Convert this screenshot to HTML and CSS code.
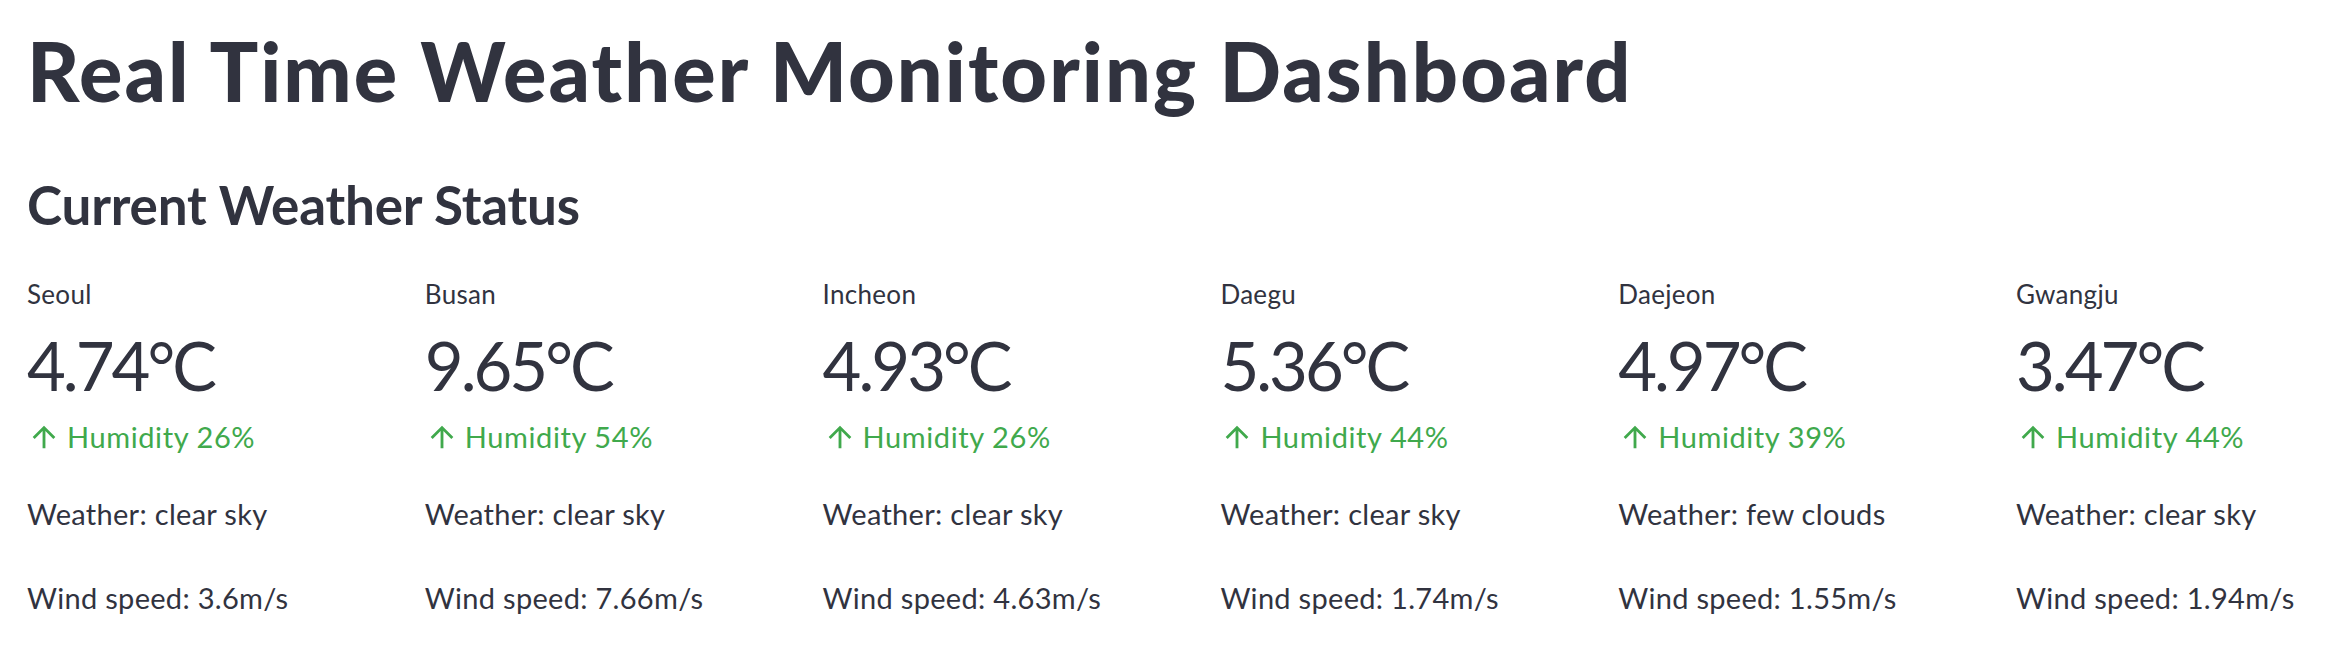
FILE: index.html
```html
<!DOCTYPE html>
<html lang="en">
<head>
<meta charset="utf-8">
<title>Real Time Weather Monitoring Dashboard</title>
<link rel="stylesheet" href="styles.css">
</head>
<body>
<main class="page">
  <h1 class="title">Real Time Weather Monitoring Dashboard</h1>
  <h3 class="subheader">Current Weather Status</h3>
  <div class="columns">
    <div class="column">
      <div class="metric-label">Seoul</div>
      <div class="metric-value">4.74°C</div>
      <div class="metric-delta"><svg class="arrow" viewBox="0 0 24 24"><path d="M4 12l1.41 1.41L11 7.83V20h2V7.83l5.58 5.59L20 12l-8-8-8 8z"/></svg><span>Humidity 26%</span></div>
      <p class="info">Weather: clear sky</p>
      <p class="info">Wind speed: 3.6m/s</p>
    </div>
    <div class="column">
      <div class="metric-label">Busan</div>
      <div class="metric-value">9.65°C</div>
      <div class="metric-delta"><svg class="arrow" viewBox="0 0 24 24"><path d="M4 12l1.41 1.41L11 7.83V20h2V7.83l5.58 5.59L20 12l-8-8-8 8z"/></svg><span>Humidity 54%</span></div>
      <p class="info">Weather: clear sky</p>
      <p class="info">Wind speed: 7.66m/s</p>
    </div>
    <div class="column">
      <div class="metric-label">Incheon</div>
      <div class="metric-value">4.93°C</div>
      <div class="metric-delta"><svg class="arrow" viewBox="0 0 24 24"><path d="M4 12l1.41 1.41L11 7.83V20h2V7.83l5.58 5.59L20 12l-8-8-8 8z"/></svg><span>Humidity 26%</span></div>
      <p class="info">Weather: clear sky</p>
      <p class="info">Wind speed: 4.63m/s</p>
    </div>
    <div class="column">
      <div class="metric-label">Daegu</div>
      <div class="metric-value">5.36°C</div>
      <div class="metric-delta"><svg class="arrow" viewBox="0 0 24 24"><path d="M4 12l1.41 1.41L11 7.83V20h2V7.83l5.58 5.59L20 12l-8-8-8 8z"/></svg><span>Humidity 44%</span></div>
      <p class="info">Weather: clear sky</p>
      <p class="info">Wind speed: 1.74m/s</p>
    </div>
    <div class="column">
      <div class="metric-label">Daejeon</div>
      <div class="metric-value">4.97°C</div>
      <div class="metric-delta"><svg class="arrow" viewBox="0 0 24 24"><path d="M4 12l1.41 1.41L11 7.83V20h2V7.83l5.58 5.59L20 12l-8-8-8 8z"/></svg><span>Humidity 39%</span></div>
      <p class="info">Weather: few clouds</p>
      <p class="info">Wind speed: 1.55m/s</p>
    </div>
    <div class="column">
      <div class="metric-label">Gwangju</div>
      <div class="metric-value">3.47°C</div>
      <div class="metric-delta"><svg class="arrow" viewBox="0 0 24 24"><path d="M4 12l1.41 1.41L11 7.83V20h2V7.83l5.58 5.59L20 12l-8-8-8 8z"/></svg><span>Humidity 44%</span></div>
      <p class="info">Weather: clear sky</p>
      <p class="info">Wind speed: 1.94m/s</p>
    </div>
  </div>
</main>
</body>
</html>
```

FILE: styles.css
```css
html, body {
  margin: 0;
  padding: 0;
  background: #ffffff;
  overflow: hidden;
}

body {
  font-family: Lato, "Noto Sans", sans-serif;
  color: #31333f;
}

.page {
  padding: 21px 0 0 27px;
}

.title {
  margin: 0;
  font-size: 81px;
  line-height: 100px;
  font-weight: 900;
  letter-spacing: 2.1px;
}

.subheader {
  margin: 49px 0 0 0;
  font-size: 53px;
  line-height: 70px;
  font-weight: 700;
  letter-spacing: -0.2px;
}

.columns {
  display: grid;
  grid-template-columns: repeat(6, 365.8px);
  column-gap: 32px;
  margin-top: 36px;
}

.column {
  display: flex;
  flex-direction: column;
}

.metric-label {
  font-size: 26px;
  line-height: 36px;
  letter-spacing: 0.3px;
}

.metric-value {
  margin-top: 11px;
  font-size: 67px;
  line-height: 84px;
  letter-spacing: -3px;
}

.metric-delta {
  margin-top: 10px;
  display: flex;
  align-items: center;
  color: #40a94c;
  font-size: 29px;
  line-height: 40px;
  letter-spacing: 0.6px;
}

.arrow {
  width: 34px;
  height: 34px;
  fill: #40a94c;
  margin-right: 6px;
  flex: none;
}

.info {
  margin: 31px 0 0 0;
  font-size: 29px;
  line-height: 52px;
  letter-spacing: 0.3px;
}

.info + .info {
  margin-top: 32px;
}
```
